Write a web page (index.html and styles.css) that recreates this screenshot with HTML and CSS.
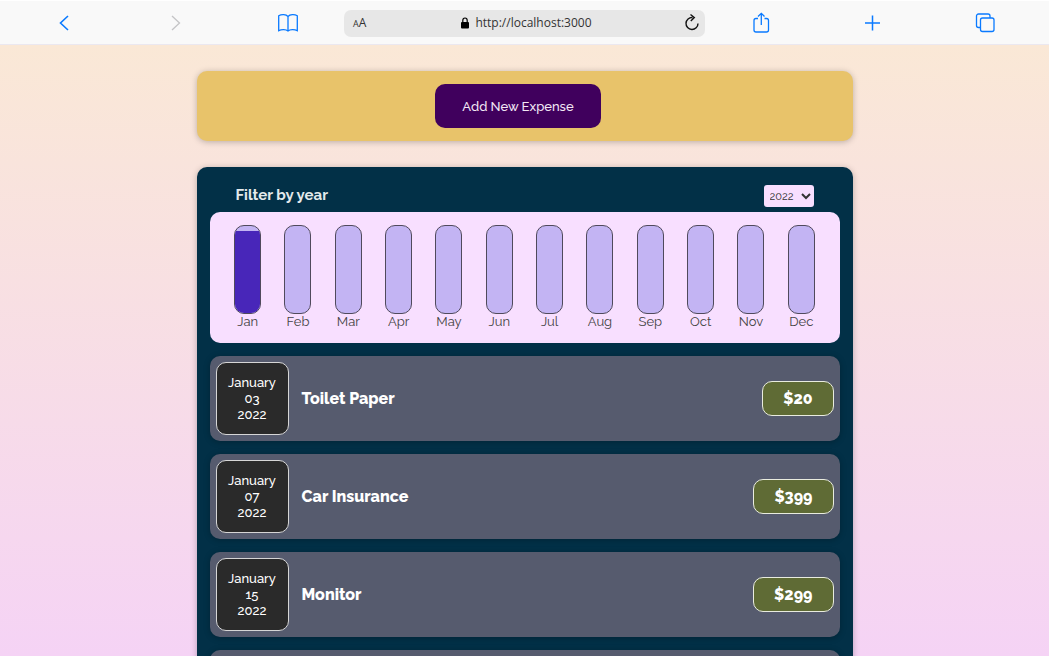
FILE: index.html
```html
<!DOCTYPE html>
<html lang="en">
<head>
<meta charset="utf-8">
<meta name="viewport" content="width=device-width, initial-scale=1">
<title>Expenses</title>
<link rel="stylesheet" href="styles.css">
</head>
<body>
<header class="toolbar">
  <div class="toolbar-group">
    <button class="tool" aria-label="Back"><svg width="24" height="24" viewBox="0 0 24 24"><path d="M16 5 8.500 12 16 19" stroke-width="1.600"/></svg></button>
    <button class="tool tool-muted" aria-label="Forward"><svg width="24" height="24" viewBox="0 0 24 24"><path d="M8 5 15.500 12 8 19" stroke-width="1.300"/></svg></button>
    <button class="tool" aria-label="Bookmarks"><svg width="24" height="24" viewBox="0 0 24 24"><path d="M12 5.500C10 3.300 5.500 3.200 2.700 4.800V19.700C5.500 18.200 10 18.300 12 20C14 18.300 18.500 18.200 21.300 19.700V4.800C18.500 3.200 14 3.300 12 5.500ZM12 5.500V20"/></svg></button>
  </div>
  <div class="address">
    <button class="text-size" aria-label="Text size"><span class="small-a">A</span>A</button>
    <span class="url"><svg width="8" height="12" viewBox="0 0 8 12"><path d="M1.800 5.500V3.400a2.200 2.400 0 0 1 4.400 0V5.500" fill="none" stroke="#000" stroke-width="1.200"/><rect y="5" width="8" height="6.500" rx="1" fill="#000"/></svg>http://localhost:3000</span>
    <button class="reload" aria-label="Reload"><svg width="16" height="20" viewBox="0 0 16 20"><path d="M8.500 4.500A6 6 0 1 0 14 10.500M6.500 1.500 10.300 4.500 6.800 8" fill="none" stroke="#111" stroke-width="1.400"/></svg></button>
  </div>
  <div class="toolbar-group">
    <button class="tool" aria-label="Share"><svg width="24" height="24" viewBox="0 0 24 24"><path d="M9 7.500H7a2 2 0 0 0-2 2V19a2 2 0 0 0 2 2H17.500a2 2 0 0 0 2-2V9.500a2 2 0 0 0-2-2H15.500M12.300 14V2.500M9 5.500 12.300 2.300 15.500 5.500"/></svg></button>
    <button class="tool" aria-label="New tab"><svg width="24" height="24" viewBox="0 0 24 24"><path d="M11.500 4.500V19.500M4 12H19" stroke-width="1.500"/></svg></button>
    <button class="tool" aria-label="Tabs"><svg width="24" height="24" viewBox="0 0 24 24"><rect x="7.500" y="7" width="13.500" height="13.500" rx="2"/><path d="M7.500 16.500H5.500a2 2 0 0 1-2-2V5a2 2 0 0 1 2-2H15a2 2 0 0 1 2 2V7"/></svg></button>
  </div>
</header>
<main class="page">
  <section class="new-expense">
    <button class="add-button">Add New Expense</button>
  </section>
  <section class="expenses">
    <div class="filter">
      <label class="filter-label" for="year">Filter by year</label>
      <select class="filter-year" id="year"><option>2022</option></select>
    </div>
    <div class="chart">
      <div class="month"><div class="bar"><div class="bar-fill" style="height: 94%"></div></div><span>Jan</span></div>
      <div class="month"><div class="bar"></div><span>Feb</span></div>
      <div class="month"><div class="bar"></div><span>Mar</span></div>
      <div class="month"><div class="bar"></div><span>Apr</span></div>
      <div class="month"><div class="bar"></div><span>May</span></div>
      <div class="month"><div class="bar"></div><span>Jun</span></div>
      <div class="month"><div class="bar"></div><span>Jul</span></div>
      <div class="month"><div class="bar"></div><span>Aug</span></div>
      <div class="month"><div class="bar"></div><span>Sep</span></div>
      <div class="month"><div class="bar"></div><span>Oct</span></div>
      <div class="month"><div class="bar"></div><span>Nov</span></div>
      <div class="month"><div class="bar"></div><span>Dec</span></div>
    </div>
    <ul class="items">
      <li class="item">
        <time class="date" datetime="2022-01-03"><span>January</span><span>03</span><span>2022</span></time>
        <h2 class="title">Toilet Paper</h2><div class="price">$20</div>
      </li>
      <li class="item">
        <time class="date" datetime="2022-01-07"><span>January</span><span>07</span><span>2022</span></time>
        <h2 class="title">Car Insurance</h2><div class="price">$399</div>
      </li>
      <li class="item">
        <time class="date" datetime="2022-01-15"><span>January</span><span>15</span><span>2022</span></time>
        <h2 class="title">Monitor</h2><div class="price">$299</div>
      </li>
      <li class="item"></li>
    </ul>
  </section>
</main>
</body>
</html>
```
FILE: styles.css
```css
* { box-sizing: border-box; }
body {
  margin: 0;
  height: 100vh;
  display: flex;
  flex-direction: column;
  overflow: hidden;
  font-family: Raleway, Lato, sans-serif;
  font-size: 13px;
}
button { font: inherit; padding: 0; border: 0; background: none; }
svg { display: block; }

.toolbar {
  flex: none;
  height: 45px;
  padding: 2px 0 1px;
  display: grid;
  grid-template-columns: 1fr 361px 1fr;
  align-items: center;
  background: #f9f9f9;
  border-top: 1px solid #fff;
  border-bottom: 1px solid #ebe8f0;
}
.toolbar-group {
  display: flex;
  justify-content: space-between;
  padding: 0 44px 0 52px;
}
.toolbar-group:last-child { padding: 0 52px 0 44px; }
.tool svg { fill: none; stroke: #0a7aff; stroke-width: 1.3; }
.tool-muted svg { stroke: #c4c4c6; }
.address {
  height: 27px;
  padding: 0 5px 0 9px;
  display: grid;
  grid-template-columns: 1fr auto 1fr;
  align-items: center;
  border-radius: 7px;
  background: #e7e7e7;
  color: #333;
  font: 12px/16px "Open Sans", "Noto Sans", sans-serif;
}
.text-size { justify-self: start; color: #333; }
.small-a { font-size: 9px; }
.url { display: flex; align-items: center; gap: 6px; }
.reload { justify-self: end; }

.page {
  flex: 1;
  min-height: 0;
  overflow: hidden;
  padding-top: 26px;
  background: linear-gradient(#fae8d6, #f5d3f5);
}
.new-expense, .expenses {
  width: 100%;
  max-width: 656px;
  margin: 0 auto 26px;
  padding: 13px;
  border-radius: 10px;
  box-shadow: 0 1px 6px rgba(0, 0, 0, 0.25);
}
.new-expense { background: #e8c36a; text-align: center; }
.add-button {
  height: 44px;
  margin-right: 13px;
  padding: 0 27px;
  border-radius: 10px;
  background: #40005d;
  color: #f3e8f5;
  font-weight: 500;
}
.expenses { background: #023047; }
.filter {
  height: 32px;
  padding: 5px 26px;
  display: flex;
  justify-content: space-between;
}
.filter-label { color: #e4eaec; font-size: 15px; font-weight: 700; line-height: 20px; }
.filter-year {
  width: 50px;
  height: 22px;
  padding: 0 2px;
  border: 0;
  border-radius: 3px;
  background: #f8dfff;
  color: #333;
  font: 11px Raleway, Lato, sans-serif;
}
.chart {
  display: flex;
  padding: 13px;
  border-radius: 10px;
  background: #f8dfff;
}
.month {
  flex: 1;
  display: flex;
  flex-direction: column;
  align-items: center;
  color: #444;
  line-height: 16px;
}
.bar {
  width: 27px;
  height: 89px;
  display: flex;
  flex-direction: column;
  justify-content: flex-end;
  overflow: hidden;
  border: 1px solid #504a5c;
  border-radius: 10px;
  background: #c3b4f3;
}
.bar-fill { background: #4826b9; }
.items {
  margin: 13px 0 0;
  padding: 0;
  display: grid;
  gap: 13px;
  list-style: none;
}
.item {
  min-height: 85px;
  padding: 6px;
  display: flex;
  align-items: center;
  border-radius: 10px;
  background: #565b6e;
  box-shadow: 0 1px 6px rgba(0, 0, 0, 0.25);
  color: #fff;
}
.date {
  width: 73px;
  height: 73px;
  display: flex;
  flex-direction: column;
  justify-content: center;
  align-items: center;
  border: 1px solid #d6d6d6;
  border-radius: 10px;
  background: #2a2a2a;
  font-weight: 500;
  line-height: 16px;
}
.title { flex: 1; margin: 0 13px; font-size: 16px; font-weight: 800; line-height: 22px; }
.price {
  padding: 6px 20px;
  border: 1px solid #e9ecdf;
  border-radius: 10px;
  background: #5f6b35;
  font-size: 16px;
  font-weight: 800;
  line-height: 21px;
}
```
